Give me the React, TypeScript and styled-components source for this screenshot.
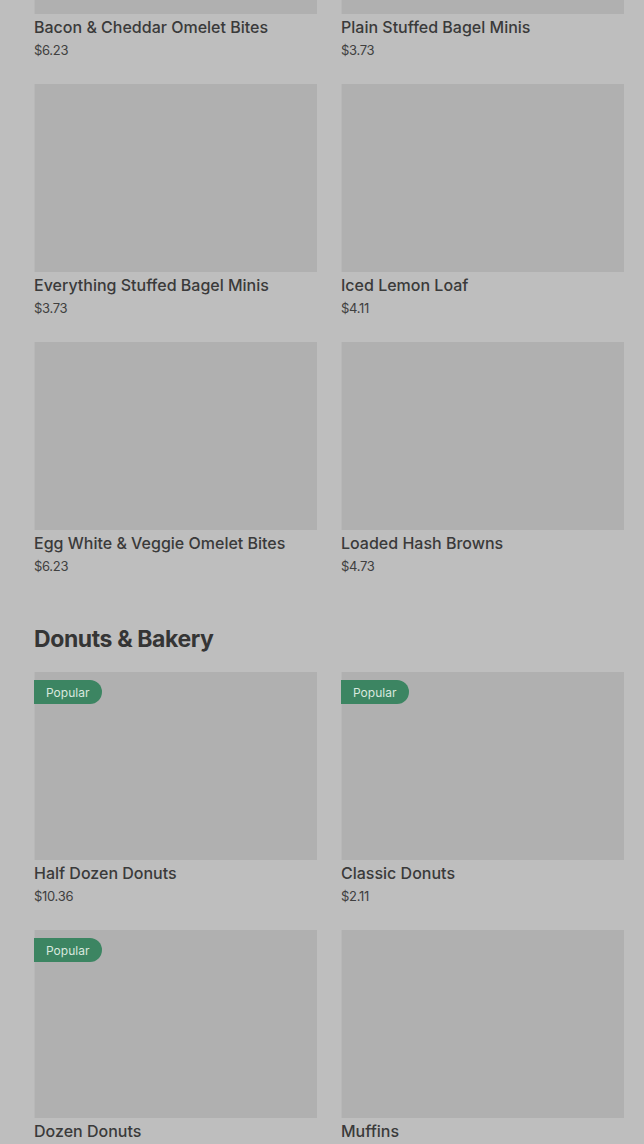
import React from "react";
import styled, { createGlobalStyle } from "styled-components";

const Global = createGlobalStyle`
  html, body { margin: 0; padding: 0; background: #bebebe; }
  body { font-family: Inter, "Noto Sans", sans-serif; color: #3a3a3a; overflow: hidden; }
`;

const Page = styled.main`
  margin-top: -174px;
  padding: 0 20px 0 34px;
`;

const Section = styled.section`
  padding-bottom: 23px;
`;

const Heading = styled.h2`
  margin: 25px 0 17px;
  font-size: 23px;
  line-height: 32px;
  font-weight: 700;
  letter-spacing: -0.4px;
  color: #353535;
`;

const Grid = styled.div`
  display: grid;
  grid-template-columns: 1fr 1fr;
  column-gap: 24px;
  row-gap: 25px;
`;

const Card = styled.article`
  display: flex;
  flex-direction: column;
`;

const Thumb = styled.div`
  position: relative;
  height: 188px;
  background: #b0b0b0;
  border-left: 1px solid #b8b8b8;
  margin-bottom: 3px;
`;

const Badge = styled.span`
  position: absolute;
  top: 8px;
  left: -1px;
  height: 24px;
  padding: 0 13px 0 12px;
  display: flex;
  align-items: center;
  background: #3c8562;
  color: #d9e8df;
  font-size: 12px;
  border-radius: 0 12px 12px 0;
`;

const Title = styled.div`
  font-size: 16px;
  line-height: 20px;
  font-weight: 500;
  color: #3a3a3a;
`;

const Price = styled.div`
  margin-top: 4px;
  font-size: 13px;
  line-height: 18px;
  letter-spacing: -0.3px;
  color: #404040;
`;

type Item = { name: string; price?: string; popular?: boolean };

const breakfast: Item[] = [
  { name: "Bacon & Cheddar Omelet Bites", price: "$6.23" },
  { name: "Plain Stuffed Bagel Minis", price: "$3.73" },
  { name: "Everything Stuffed Bagel Minis", price: "$3.73" },
  { name: "Iced Lemon Loaf", price: "$4.11" },
  { name: "Egg White & Veggie Omelet Bites", price: "$6.23" },
  { name: "Loaded Hash Browns", price: "$4.73" },
];

const bakery: Item[] = [
  { name: "Half Dozen Donuts", price: "$10.36", popular: true },
  { name: "Classic Donuts", price: "$2.11", popular: true },
  { name: "Dozen Donuts", popular: true },
  { name: "Muffins" },
];

const ItemCard = ({ item }: { item: Item }) => (
  <Card>
    <Thumb>{item.popular && <Badge>Popular</Badge>}</Thumb>
    <Title>{item.name}</Title>
    {item.price && <Price>{item.price}</Price>}
  </Card>
);

export default function App() {
  return (
    <>
      <Global />
      <Page>
        <Section>
          <Grid>
            {breakfast.map((i) => (
              <ItemCard key={i.name} item={i} />
            ))}
          </Grid>
        </Section>
        <Section>
          <Heading>Donuts &amp; Bakery</Heading>
          <Grid>
            {bakery.map((i) => (
              <ItemCard key={i.name} item={i} />
            ))}
          </Grid>
        </Section>
      </Page>
    </>
  );
}
